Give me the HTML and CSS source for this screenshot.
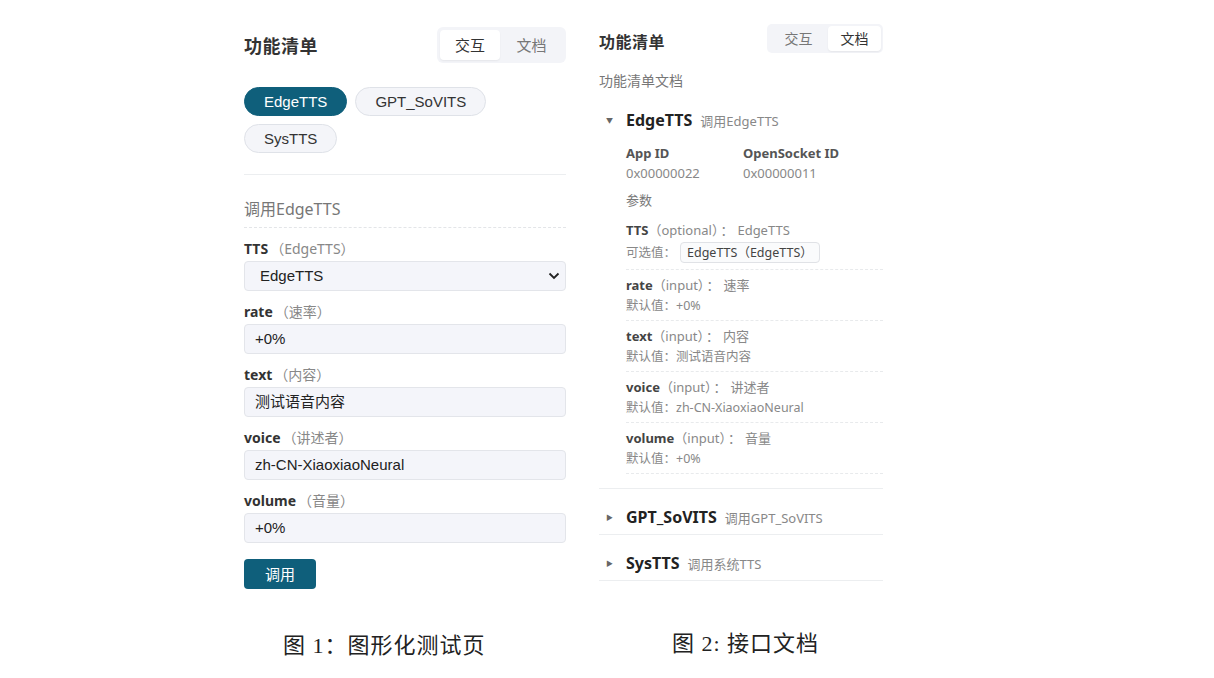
FILE: index.html
```html
<!DOCTYPE html>
<html lang="zh">
<head>
<meta charset="utf-8">
<link rel="stylesheet" href="styles.css">
</head>
<body>
<div class="page">
  <div class="fig fig-left">
    <div class="panel-left">
      <div class="head">
        <div class="title">功能清单</div>
        <div class="tabs">
          <div class="tab active">交互</div>
          <div class="tab">文档</div>
        </div>
      </div>
      <div class="pills">
        <div class="pill active">EdgeTTS</div>
        <div class="pill">GPT_SoVITS</div>
        <div class="pill">SysTTS</div>
      </div>
      <div class="divider"></div>
      <div class="sec-title">调用EdgeTTS</div>
      <div class="field">
        <div class="label"><b>TTS</b><span class="hint">（EdgeTTS）</span></div>
        <div class="control select"><span>EdgeTTS</span>
          <svg width="12" height="8" viewBox="0 0 12 8"><path d="M1.5 1.5 L6 6 L10.5 1.5" fill="none" stroke="#222" stroke-width="1.8"/></svg>
        </div>
      </div>
      <div class="field">
        <div class="label"><b>rate</b><span class="hint">（速率）</span></div>
        <div class="control">+0%</div>
      </div>
      <div class="field">
        <div class="label"><b>text</b><span class="hint">（内容）</span></div>
        <div class="control">测试语音内容</div>
      </div>
      <div class="field">
        <div class="label"><b>voice</b><span class="hint">（讲述者）</span></div>
        <div class="control">zh-CN-XiaoxiaoNeural</div>
      </div>
      <div class="field">
        <div class="label"><b>volume</b><span class="hint">（音量）</span></div>
        <div class="control">+0%</div>
      </div>
      <div class="btn">调用</div>
    </div>
    <div class="caption cap-left">图 1：图形化测试页</div>
  </div>

  <div class="fig fig-right">
    <div class="panel-right">
      <div class="head head-r">
        <div class="title title-r">功能清单</div>
        <div class="tabs tabs-r">
          <div class="tab">交互</div>
          <div class="tab active">文档</div>
        </div>
      </div>
      <div class="doc-sub">功能清单文档</div>

      <div class="item open">
        <div class="summary"><span class="tri">▼</span><b class="name">EdgeTTS</b><span class="desc">调用EdgeTTS</span></div>
        <div class="body">
          <div class="ids">
            <div class="id-col"><div class="id-k">App ID</div><div class="id-v">0x00000022</div></div>
            <div class="id-col"><div class="id-k">OpenSocket ID</div><div class="id-v">0x00000011</div></div>
          </div>
          <div class="params-title">参数</div>
          <div class="param first">
            <div class="pline"><b>TTS</b><span class="ptype">（optional）</span><span class="pc">：</span><span class="pdesc">EdgeTTS</span></div>
            <div class="psub">可选值：<span class="chip">EdgeTTS（EdgeTTS）</span></div>
          </div>
          <div class="param">
            <div class="pline"><b>rate</b><span class="ptype">（input）</span><span class="pc">：</span><span class="pdesc">速率</span></div>
            <div class="psub">默认值：+0%</div>
          </div>
          <div class="param">
            <div class="pline"><b>text</b><span class="ptype">（input）</span><span class="pc">：</span><span class="pdesc">内容</span></div>
            <div class="psub">默认值：测试语音内容</div>
          </div>
          <div class="param">
            <div class="pline"><b>voice</b><span class="ptype">（input）</span><span class="pc">：</span><span class="pdesc">讲述者</span></div>
            <div class="psub">默认值：zh-CN-XiaoxiaoNeural</div>
          </div>
          <div class="param">
            <div class="pline"><b>volume</b><span class="ptype">（input）</span><span class="pc">：</span><span class="pdesc">音量</span></div>
            <div class="psub">默认值：+0%</div>
          </div>
        </div>
      </div>

      <div class="item">
        <div class="summary"><span class="tri">▶</span><b class="name">GPT_SoVITS</b><span class="desc">调用GPT_SoVITS</span></div>
      </div>
      <div class="item">
        <div class="summary"><span class="tri">▶</span><b class="name">SysTTS</b><span class="desc">调用系统TTS</span></div>
      </div>
    </div>
    <div class="caption cap-right">图 2: 接口文档</div>
  </div>
</div>
</body>
</html>
```

FILE: styles.css
```css
* { box-sizing: border-box; }
html, body { margin: 0; padding: 0; background: #fff; }
body {
  font-family: "Noto Sans", "Noto Sans CJK SC", sans-serif;
  color: #333;
  width: 1214px;
  height: 678px;
  overflow: hidden;
}
.page {
  display: flex;
  padding-left: 244px;
  gap: 33px;
}
.fig { display: flex; flex-direction: column; }

/* ---------- left ---------- */
.panel-left { width: 322px; padding-top: 27px; }
.head { display: flex; justify-content: space-between; align-items: center; }
.title { font-size: 18px; font-weight: 700; color: #333; letter-spacing: 0.5px; }
.tabs {
  display: flex;
  background: #f3f4f8;
  border-radius: 6px;
  padding: 3px;
}
.tab {
  width: 63px;
  height: 30px;
  line-height: 30px;
  text-align: center;
  font-size: 15px;
  color: #777;
  border-radius: 4px;
}
.tab.active { width: 60px; background: #fff; color: #333; box-shadow: 0 1px 2px rgba(0,0,0,0.06); }

.pills { display: flex; flex-wrap: wrap; gap: 8px; margin-top: 24px; width: 260px; }
.pill {
  height: 29px;
  line-height: 27px;
  padding: 0 19px;
  border-radius: 15px;
  border: 1px solid #dfe2e8;
  background: #f4f5f9;
  font-family: "Liberation Sans", Arial, sans-serif;
  font-size: 15px;
  color: #333;
}
.pill.active { background: #0f5f7b; border-color: #0f5f7b; color: #fff; }

.divider { height: 1px; background: #eceef0; margin-top: 21px; }
.sec-title {
  margin-top: 23px;
  font-size: 16px;
  color: #777;
  line-height: 22px;
  padding-bottom: 7px;
  border-bottom: 1px dashed #e3e5e8;
}
.field { margin-top: 11px; }
.label { font-size: 14px; line-height: 20px; height: 21px; }
.label b { color: #333; font-weight: 700; }
.hint { color: #888; margin-left: 2px; }
.control {
  margin-top: 1px;
  height: 30px;
  line-height: 28px;
  border: 1px solid #e3e5ea;
  border-radius: 4px;
  background: #f4f5fa;
  padding-left: 10px;
  font-family: "Liberation Sans", Arial, "Noto Sans CJK SC", sans-serif;
  font-size: 15px;
  color: #222;
}
.select { display: flex; justify-content: space-between; align-items: center; padding-left: 15px; padding-right: 5px; }
.select svg { display: block; }
.btn {
  margin-top: 16px;
  width: 72px;
  height: 30px;
  line-height: 30px;
  text-align: center;
  background: #0f5f7b;
  color: #fff;
  border-radius: 4px;
  font-size: 15px;
}

/* ---------- right ---------- */
.panel-right { width: 284px; padding-top: 23px; }
.head-r { align-items: center; }
.title-r { font-size: 16px; padding-top: 6px; }
.tabs-r { padding: 2px; border-radius: 5px; }
.tabs-r .tab { width: 59px; height: 25px; line-height: 25px; font-size: 14px; }
.tabs-r .tab.active { width: 53px; }
.doc-sub { margin-top: 18px; font-size: 14px; color: #777; line-height: 20px; }

.item { border-bottom: 1px solid #eceef0; }
.summary {
  display: flex;
  align-items: baseline;
  padding: 16px 0 5px 0;
  height: 45px;
  line-height: 24px;
}
.item.open .summary { height: auto; padding: 17px 0 0 0; }
.tri { width: 27px; padding-left: 7px; font-size: 7px; color: #666; position: relative; top: -3px; }
.name { font-size: 16px; color: #222; font-weight: 700; }
.desc { font-size: 13px; color: #888; margin-left: 8px; }

.body { padding: 7px 0 14px 27px; }
.ids { display: flex; }
.id-col { width: 117px; }
.id-k { font-size: 13px; font-weight: 700; color: #555; line-height: 20px; }
.id-v { font-size: 13px; color: #888; line-height: 20px; }
.params-title { margin-top: 7px; font-size: 13px; color: #777; line-height: 20px; }
.param { padding: 5px 0 4px 0; border-bottom: 1px dashed #e8eaec; }
.param.first { padding-top: 10px; padding-bottom: 5px; }
.pline { font-size: 13px; line-height: 20px; color: #888; }
.pline b { color: #444; font-weight: 700; }
.pc { margin: 0 4px 0 2px; }
.psub { font-size: 12.5px; line-height: 21px; color: #888; }
.param.first .psub { line-height: 22px; margin-top: 2px; }
.chip {
  display: inline-block;
  margin-left: 4px;
  height: 21px;
  line-height: 19px;
  padding: 0 6px;
  border: 1px solid #e0e2e6;
  border-radius: 4px;
  background: #fafbfc;
  color: #444;
  font-size: 12.5px;
}

/* ---------- captions ---------- */
.caption {
  font-family: "Liberation Serif", "Noto Sans CJK SC", serif;
  font-size: 22px;
  line-height: 30px;
  color: #222;
  letter-spacing: 1px;
}
.cap-left { margin-top: 42px; padding-left: 39px; }
.cap-right { margin-top: 48px; padding-left: 73px; }
```
